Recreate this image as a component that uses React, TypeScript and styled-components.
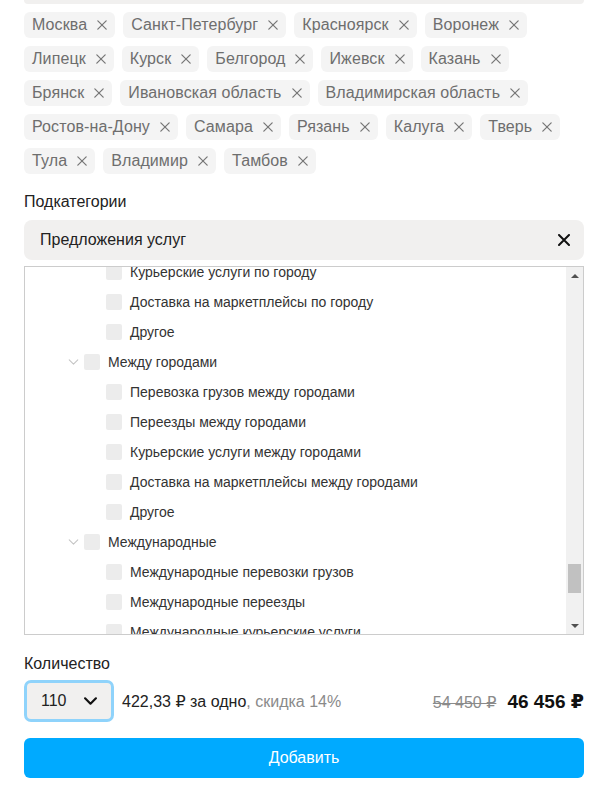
import React, { useLayoutEffect, useRef, useState } from 'react';
import styled, { createGlobalStyle } from 'styled-components';

const GlobalStyle = createGlobalStyle`
    html, body {
        margin: 0;
        padding: 0;
        background: #ffffff;
    }
    body {
        font-family: "Liberation Sans", Arial, "DejaVu Sans", sans-serif;
        color: #222222;
    }
    * {
        box-sizing: border-box;
    }
`;

const cities = [
    'Москва',
    'Санкт-Петербург',
    'Красноярск',
    'Воронеж',
    'Липецк',
    'Курск',
    'Белгород',
    'Ижевск',
    'Казань',
    'Брянск',
    'Ивановская область',
    'Владимирская область',
    'Ростов-на-Дону',
    'Самара',
    'Рязань',
    'Калуга',
    'Тверь',
    'Тула',
    'Владимир',
    'Тамбов',
];

interface TreeNode {
    name: string;
    children?: (TreeNode | string)[];
}

const tree: TreeNode[] = [
    {
        name: 'Ремонт и строительство',
        children: [
            { name: 'Отделочные работы', children: ['Малярные работы', 'Штукатурные работы', 'Укладка плитки', 'Поклейка обоев', 'Монтаж натяжных потолков', 'Другое'] },
            { name: 'Сантехника', children: ['Установка сантехники', 'Замена труб', 'Монтаж отопления', 'Другое'] },
            { name: 'Электрика', children: ['Электромонтажные работы', 'Установка розеток и выключателей', 'Монтаж освещения', 'Другое'] },
            { name: 'Строительство домов', children: ['Фундаментные работы', 'Кровельные работы', 'Строительство бань', 'Другое'] },
        ],
    },
    {
        name: 'Красота и здоровье',
        children: [
            { name: 'Маникюр и педикюр', children: ['Маникюр', 'Педикюр', 'Наращивание ногтей', 'Другое'] },
            { name: 'Стрижки и укладки', children: ['Женские стрижки', 'Мужские стрижки', 'Окрашивание волос', 'Другое'] },
            { name: 'Массаж', children: ['Классический массаж', 'Спортивный массаж', 'Другое'] },
        ],
    },
    {
        name: 'Обучение и курсы',
        children: [
            { name: 'Репетиторы', children: ['Математика', 'Русский язык', 'Английский язык', 'Подготовка к ЕГЭ', 'Другое'] },
            { name: 'Курсы', children: ['IT-курсы', 'Курсы вождения', 'Другое'] },
            { name: 'Музыка', children: ['Вокал', 'Игра на гитаре', 'Игра на фортепиано', 'Другое'] },
        ],
    },
    {
        name: 'Уборка',
        children: [
            { name: 'Уборка квартир', children: ['Генеральная уборка', 'Поддерживающая уборка', 'Уборка после ремонта', 'Другое'] },
            { name: 'Химчистка', children: ['Химчистка мебели', 'Химчистка ковров', 'Другое'] },
        ],
    },
    {
        name: 'Ремонт техники',
        children: [
            { name: 'Бытовая техника', children: ['Ремонт холодильников', 'Ремонт стиральных машин', 'Другое'] },
            { name: 'Компьютеры и телефоны', children: ['Ремонт компьютеров', 'Ремонт телефонов', 'Настройка ПО', 'Другое'] },
        ],
    },
    {
        name: 'Праздники и мероприятия',
        children: [
            { name: 'Организация', children: ['Организация свадеб', 'Детские праздники', 'Корпоративы', 'Другое'] },
            { name: 'Фото и видео', children: ['Фотосъёмка', 'Видеосъёмка', 'Монтаж видео', 'Другое'] },
            { name: 'Ведущие и артисты', children: ['Ведущие', 'Музыканты', 'Аниматоры', 'Другое'] },
        ],
    },
    {
        name: 'Уход за животными',
        children: [
            { name: 'Груминг', children: ['Стрижка собак', 'Стрижка кошек', 'Другое'] },
            { name: 'Передержка и выгул', children: ['Передержка', 'Выгул собак', 'Другое'] },
            { name: 'Дрессировка', children: ['Дрессировка собак', 'Другое'] },
        ],
    },
    {
        name: 'Деловые услуги',
        children: [
            { name: 'Бухгалтерия', children: ['Ведение бухгалтерии', 'Налоговые декларации', 'Другое'] },
            { name: 'Юридические услуги', children: ['Консультации юриста', 'Регистрация бизнеса', 'Другое'] },
            { name: 'Перевод', children: ['Письменный перевод', 'Устный перевод', 'Другое'] },
        ],
    },
    {
        name: 'Грузоперевозки',
        children: [
            { name: 'По городу', children: ['Перевозка грузов по городу', 'Переезды по городу', 'Курьерские услуги по городу', 'Доставка на маркетплейсы по городу', 'Другое'] },
            { name: 'Между городами', children: ['Перевозка грузов между городами', 'Переезды между городами', 'Курьерские услуги между городами', 'Доставка на маркетплейсы между городами', 'Другое'] },
            { name: 'Международные', children: ['Международные перевозки грузов', 'Международные переезды', 'Международные курьерские услуги', 'Таможенное оформление', 'Другое'] },
            { name: 'Грузчики', children: ['Погрузка и разгрузка', 'Такелажные работы', 'Другое'] },
        ],
    },
    {
        name: 'Спецтехника',
        children: [{ name: 'Аренда спецтехники', children: ['Экскаваторы', 'Автокраны'] }],
    },
];

interface FlatRow {
    key: string;
    name: string;
    level: number;
    group: boolean;
}

function flatten(nodes: (TreeNode | string)[], level: number, path: string, out: FlatRow[]) {
    nodes.forEach((node, i) => {
        const key = `${path}-${i}`;
        if (typeof node === 'string') {
            out.push({ key, name: node, level, group: false });
        } else {
            out.push({ key, name: node.name, level, group: true });
            if (node.children) flatten(node.children, level + 1, key, out);
        }
    });
    return out;
}

const rows = flatten(tree, 0, 'n', []);
const anchorName = 'Курьерские услуги по городу';
const ARROW = 17;

const CrossIcon = ({ size, stroke, width }: { size: number; stroke: string; width: number }) => (
    <svg width={size} height={size} viewBox="0 0 12 12" fill="none">
        <path d="M1 1L11 11M11 1L1 11" stroke={stroke} strokeWidth={width} strokeLinecap="round" />
    </svg>
);

const ChevronIcon = ({ w, h, stroke, width }: { w: number; h: number; stroke: string; width: number }) => (
    <svg width={w} height={h} viewBox="0 0 12 7" fill="none">
        <path d="M1 1L6 6L11 1" stroke={stroke} strokeWidth={width} strokeLinecap="round" strokeLinejoin="round" />
    </svg>
);

export default function App() {
    const viewRef = useRef<HTMLDivElement>(null);
    const anchorRef = useRef<HTMLDivElement>(null);
    const [thumb, setThumb] = useState({ top: 0, height: 30 });

    useLayoutEffect(() => {
        const view = viewRef.current;
        if (!view || !anchorRef.current) return;
        view.scrollTop = anchorRef.current.offsetTop + 10;
        const track = view.clientHeight - ARROW * 2;
        const height = Math.max(18, (track * view.clientHeight) / view.scrollHeight);
        const max = view.scrollHeight - view.clientHeight;
        const top = max > 0 ? ((track - height) * view.scrollTop) / max : 0;
        setThumb({ top, height });
    }, []);

    return (
        <>
            <GlobalStyle />
            <Page>
                <FieldTail />
                <Chips>
                    {cities.map((city) => (
                        <Chip key={city}>
                            {city}
                            <ChipRemove>
                                <CrossIcon size={10} stroke="#777777" width={1.5} />
                            </ChipRemove>
                        </Chip>
                    ))}
                </Chips>

                <Label>Подкатегории</Label>
                <SelectBox>
                    <span>Предложения услуг</span>
                    <ClearButton>
                        <CrossIcon size={12} stroke="#111111" width={2} />
                    </ClearButton>
                </SelectBox>

                <ListBox>
                    <Viewport ref={viewRef}>
                        {rows.map((row) => (
                            <Row key={row.key} ref={row.name === anchorName ? anchorRef : undefined}>
                                <Indent $level={row.level} />
                                <Toggle>
                                    {row.group && <ChevronIcon w={11} h={6} stroke="#c4c4c4" width={1.2} />}
                                </Toggle>
                                <CheckBox />
                                <RowText>{row.name}</RowText>
                            </Row>
                        ))}
                    </Viewport>
                    <ScrollBar>
                        <ScrollArrow>
                            <Triangle $dir="up" />
                        </ScrollArrow>
                        <ScrollTrack>
                            <ScrollThumb style={{ marginTop: thumb.top, height: thumb.height }} />
                        </ScrollTrack>
                        <ScrollArrow>
                            <Triangle $dir="down" />
                        </ScrollArrow>
                    </ScrollBar>
                </ListBox>

                <QtyLabel>Количество</QtyLabel>
                <QtyRow>
                    <QtySelect>
                        <span>110</span>
                        <ChevronIcon w={13} h={8} stroke="#111111" width={2} />
                    </QtySelect>
                    <UnitPrice>
                        422,33 ₽ за одно<Discount>, скидка 14%</Discount>
                    </UnitPrice>
                    <Prices>
                        <OldPrice>54 450 ₽</OldPrice>
                        <NewPrice>46 456 ₽</NewPrice>
                    </Prices>
                </QtyRow>

                <AddButton>Добавить</AddButton>
            </Page>
        </>
    );
}

const Page = styled.div`
    width: 594px;
    padding: 0 10px 0 24px;
    display: flex;
    flex-direction: column;
`;

const FieldTail = styled.div`
    height: 4px;
    background: #f1f0ef;
    border-radius: 0 0 8px 8px;
`;

const Chips = styled.div`
    margin-top: 8px;
    display: flex;
    flex-wrap: wrap;
    gap: 8px 8px;
`;

const Chip = styled.div`
    height: 26px;
    display: flex;
    align-items: center;
    gap: 10px;
    padding: 0 8px;
    background: #f4f4f4;
    border-radius: 6px;
    font-size: 16px;
    letter-spacing: 0.1px;
    color: #6e6e6e;
`;

const ChipRemove = styled.span`
    display: flex;
    align-items: center;
    cursor: pointer;
`;

const Label = styled.div`
    margin-top: 18px;
    font-size: 16px;
    line-height: 20px;
    color: #222222;
`;

const SelectBox = styled.div`
    margin-top: 8px;
    height: 40px;
    display: flex;
    align-items: center;
    justify-content: space-between;
    padding: 0 14px 0 16px;
    background: #f1f0ef;
    border-radius: 8px;
    font-size: 16px;
    color: #222222;
`;

const ClearButton = styled.span`
    display: flex;
    align-items: center;
`;

const ListBox = styled.div`
    margin-top: 6px;
    height: 369px;
    display: flex;
    border: 1px solid #cccccc;
`;

const Viewport = styled.div`
    position: relative;
    flex: 1;
    min-width: 0;
    overflow: hidden;
`;

const ScrollBar = styled.div`
    flex: none;
    width: 17px;
    display: flex;
    flex-direction: column;
    background: #f1f1f1;
`;

const ScrollArrow = styled.div`
    flex: none;
    height: ${ARROW}px;
    display: flex;
    align-items: center;
    justify-content: center;
`;

const Triangle = styled.span<{ $dir: 'up' | 'down' }>`
    width: 0;
    height: 0;
    border-left: 4px solid transparent;
    border-right: 4px solid transparent;
    ${(p) => (p.$dir === 'up' ? 'border-bottom: 4px solid #505050;' : 'border-top: 4px solid #505050;')}
`;

const ScrollTrack = styled.div`
    flex: 1;
    display: flex;
    flex-direction: column;
    align-items: center;
`;

const ScrollThumb = styled.div`
    width: 13px;
    background: #c1c1c1;
`;

const Row = styled.div`
    height: 30px;
    display: flex;
    align-items: center;
    padding-left: 15px;
`;

const Indent = styled.span<{ $level: number }>`
    flex: none;
    width: ${(p) => p.$level * 22}px;
`;

const Toggle = styled.span`
    flex: none;
    width: 22px;
    display: flex;
    align-items: center;
    justify-content: center;
`;

const CheckBox = styled.span`
    flex: none;
    width: 16px;
    height: 16px;
    background: #ececec;
    border-radius: 2px;
`;

const RowText = styled.span`
    margin-left: 8px;
    font-size: 14px;
    color: #333333;
    white-space: nowrap;
`;

const QtyLabel = styled.div`
    margin-top: 19px;
    font-size: 16px;
    line-height: 20px;
    color: #222222;
`;

const QtyRow = styled.div`
    margin-top: 6px;
    display: flex;
    align-items: center;
`;

const QtySelect = styled.div`
    width: 90px;
    height: 42px;
    display: flex;
    align-items: center;
    justify-content: space-between;
    padding: 0 14px 0 14px;
    background: #f1f0ef;
    border: 3px solid #8fd3fb;
    border-radius: 7px;
    font-size: 16px;
    color: #222222;
`;

const UnitPrice = styled.div`
    margin-left: 8px;
    font-size: 16px;
    color: #222222;
`;

const Discount = styled.span`
    color: #8a8a8a;
`;

const Prices = styled.div`
    margin-left: auto;
    display: flex;
    align-items: baseline;
    gap: 11px;
`;

const OldPrice = styled.span`
    font-size: 16px;
    color: #8a8a8a;
    text-decoration: line-through;
`;

const NewPrice = styled.span`
    font-size: 19px;
    font-weight: 700;
    color: #111111;
`;

const AddButton = styled.button`
    margin-top: 16px;
    height: 40px;
    border: none;
    border-radius: 6px;
    background: #00aaff;
    color: #ffffff;
    font-family: inherit;
    font-size: 16px;
    cursor: pointer;
`;
